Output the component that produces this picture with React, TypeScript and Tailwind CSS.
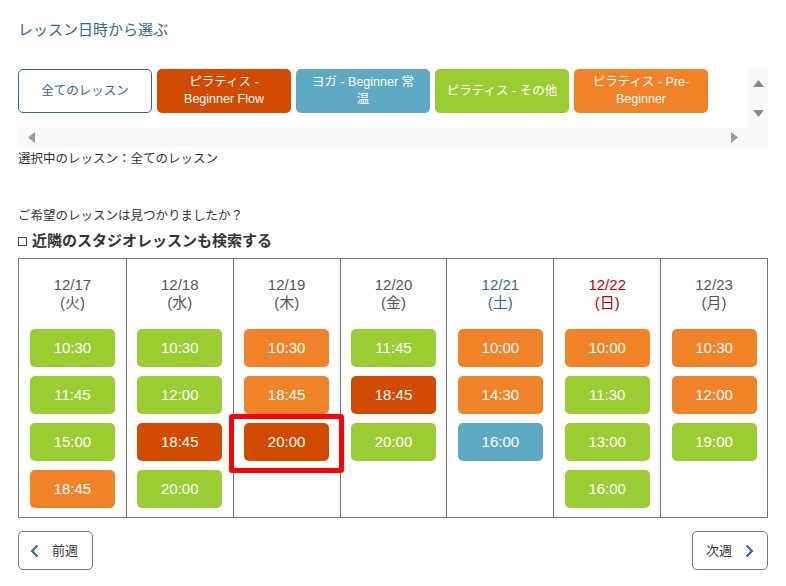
import React from "react";

type Slot = { t: string; k: "g" | "o" | "r" | "t"; hl?: boolean };
type Day = { d: string; w: string; c: string; slots: Slot[] };

const colorMap: Record<string, string> = {
  g: "bg-[#9acd32]",
  o: "bg-[#f08228]",
  r: "bg-[#d24a00]",
  t: "bg-[#5eaac3]",
};

const days: Day[] = [
  { d: "12/17", w: "火", c: "text-[#555]", slots: [{ t: "10:30", k: "g" }, { t: "11:45", k: "g" }, { t: "15:00", k: "g" }, { t: "18:45", k: "o" }] },
  { d: "12/18", w: "水", c: "text-[#555]", slots: [{ t: "10:30", k: "g" }, { t: "12:00", k: "g" }, { t: "18:45", k: "r" }, { t: "20:00", k: "g" }] },
  { d: "12/19", w: "木", c: "text-[#555]", slots: [{ t: "10:30", k: "o" }, { t: "18:45", k: "o" }, { t: "20:00", k: "r", hl: true }] },
  { d: "12/20", w: "金", c: "text-[#555]", slots: [{ t: "11:45", k: "g" }, { t: "18:45", k: "r" }, { t: "20:00", k: "g" }] },
  { d: "12/21", w: "土", c: "text-[#2f6aa8]", slots: [{ t: "10:00", k: "o" }, { t: "14:30", k: "o" }, { t: "16:00", k: "t" }] },
  { d: "12/22", w: "日", c: "text-[#c00000]", slots: [{ t: "10:00", k: "o" }, { t: "11:30", k: "g" }, { t: "13:00", k: "g" }, { t: "16:00", k: "g" }] },
  { d: "12/23", w: "月", c: "text-[#555]", slots: [{ t: "10:30", k: "o" }, { t: "12:00", k: "o" }, { t: "19:00", k: "g" }] },
];

const filters: { label: React.ReactNode; cls: string }[] = [
  { label: "全てのレッスン", cls: "bg-white border border-[#2e6a9a] text-[#2e6a9a]" },
  { label: <>ピラティス -<br />Beginner Flow</>, cls: "bg-[#d24a00] text-white" },
  { label: <>ヨガ - Beginner 常<br />温</>, cls: "bg-[#5eaac3] text-white" },
  { label: "ピラティス - その他", cls: "bg-[#9acd32] text-white" },
  { label: <>ピラティス - Pre-<br />Beginner</>, cls: "bg-[#f08228] text-white" },
];

export default function App() {
  return (
    <div
      className="w-[786px] h-[586px] bg-white text-[#333] px-[18px] overflow-hidden"
      style={{ fontFamily: '"Liberation Sans", "Noto Sans CJK JP", sans-serif' }}
    >
      <h1 className="pt-[20px] text-[15px] leading-[20px] text-[#33689c] font-normal">レッスン日時から選ぶ</h1>

      {/* filter scroller */}
      <div className="mt-[29px] w-[750px]">
        <div className="flex h-[59px]">
          <div className="flex-1 flex gap-[5px] overflow-hidden">
            {filters.map((f, i) => (
              <div
                key={i}
                className={`w-[134px] h-[44px] shrink-0 rounded-[5px] flex items-center justify-center text-center text-[12.5px] leading-[17px] ${f.cls}`}
              >
                <span>{f.label}</span>
              </div>
            ))}
          </div>
          <div className="w-[20px] bg-[#f8f8f8] flex flex-col items-center justify-between pt-[11px] pb-[11px]">
            <svg width="11" height="7" viewBox="0 0 11 7"><polygon points="5.5,0 11,7 0,7" fill="#8a8a8a" /></svg>
            <svg width="11" height="7" viewBox="0 0 11 7"><polygon points="0,0 11,0 5.5,7" fill="#8a8a8a" /></svg>
          </div>
        </div>
        <div className="h-[19px] bg-[#f8f8f8] flex items-center justify-between pl-[10px] pr-[30px]">
          <svg width="7" height="11" viewBox="0 0 7 11"><polygon points="7,0 7,11 0,5.5" fill="#9a9a9a" /></svg>
          <svg width="7" height="11" viewBox="0 0 7 11"><polygon points="0,0 7,5.5 0,11" fill="#9a9a9a" /></svg>
        </div>
      </div>

      <p className="mt-[3px] text-[12.5px] leading-[18px]">選択中のレッスン：全てのレッスン</p>

      <p className="mt-[39px] text-[12.5px] leading-[18px]">ご希望のレッスンは見つかりましたか？</p>
      <div className="mt-[6px] flex items-center gap-[5px]">
        <span className="inline-block w-[9px] h-[9px] border border-[#444] bg-white" />
        <span className="text-[15px] leading-[20px] font-bold text-[#333]">近隣のスタジオレッスンも検索する</span>
      </div>

      {/* table */}
      <div className="mt-[7px] w-[750px] grid grid-cols-7 border border-[#777]">
        {days.map((day, i) => (
          <div key={day.d} className={`${i > 0 ? "border-l border-[#777]" : ""} pt-[17px] pb-[9px] flex flex-col items-center`}>
            <div className={`text-[15px] leading-[18px] text-center ${day.c}`}>
              <div>{day.d}</div>
              <div>({day.w})</div>
            </div>
            <div className="mt-[17px] flex flex-col gap-[9px]">
              {day.slots.map((s, j) => (
                <div key={j} className="relative">
                  <div className={`w-[85px] h-[38px] rounded-[5px] flex items-center justify-center text-white text-[15px] ${colorMap[s.k]}`}>
                    {s.t}
                  </div>
                  {s.hl && (
                    <div className="absolute left-[-15px] top-[-9px] w-[115px] h-[59px] border-[5px] border-[#ff0000] rounded-[3px]" />
                  )}
                </div>
              ))}
            </div>
          </div>
        ))}
      </div>

      {/* nav */}
      <div className="mt-[13px] w-[750px] flex justify-between">
        <div className="w-[75px] h-[39px] border border-[#777] rounded-[5px] flex items-center pl-[11px] gap-[13px]">
          <svg width="9" height="14" viewBox="0 0 9 14"><polyline points="7.5,1.5 2,7 7.5,12.5" fill="none" stroke="#2e6a9a" strokeWidth="2.2" /></svg>
          <span className="text-[13px] text-[#333]">前週</span>
        </div>
        <div className="w-[76px] h-[39px] border border-[#777] rounded-[5px] flex items-center justify-end pr-[13px] gap-[13px]">
          <span className="text-[13px] text-[#333]">次週</span>
          <svg width="9" height="14" viewBox="0 0 9 14"><polyline points="1.5,1.5 7,7 1.5,12.5" fill="none" stroke="#2e6a9a" strokeWidth="2.2" /></svg>
        </div>
      </div>
    </div>
  );
}
